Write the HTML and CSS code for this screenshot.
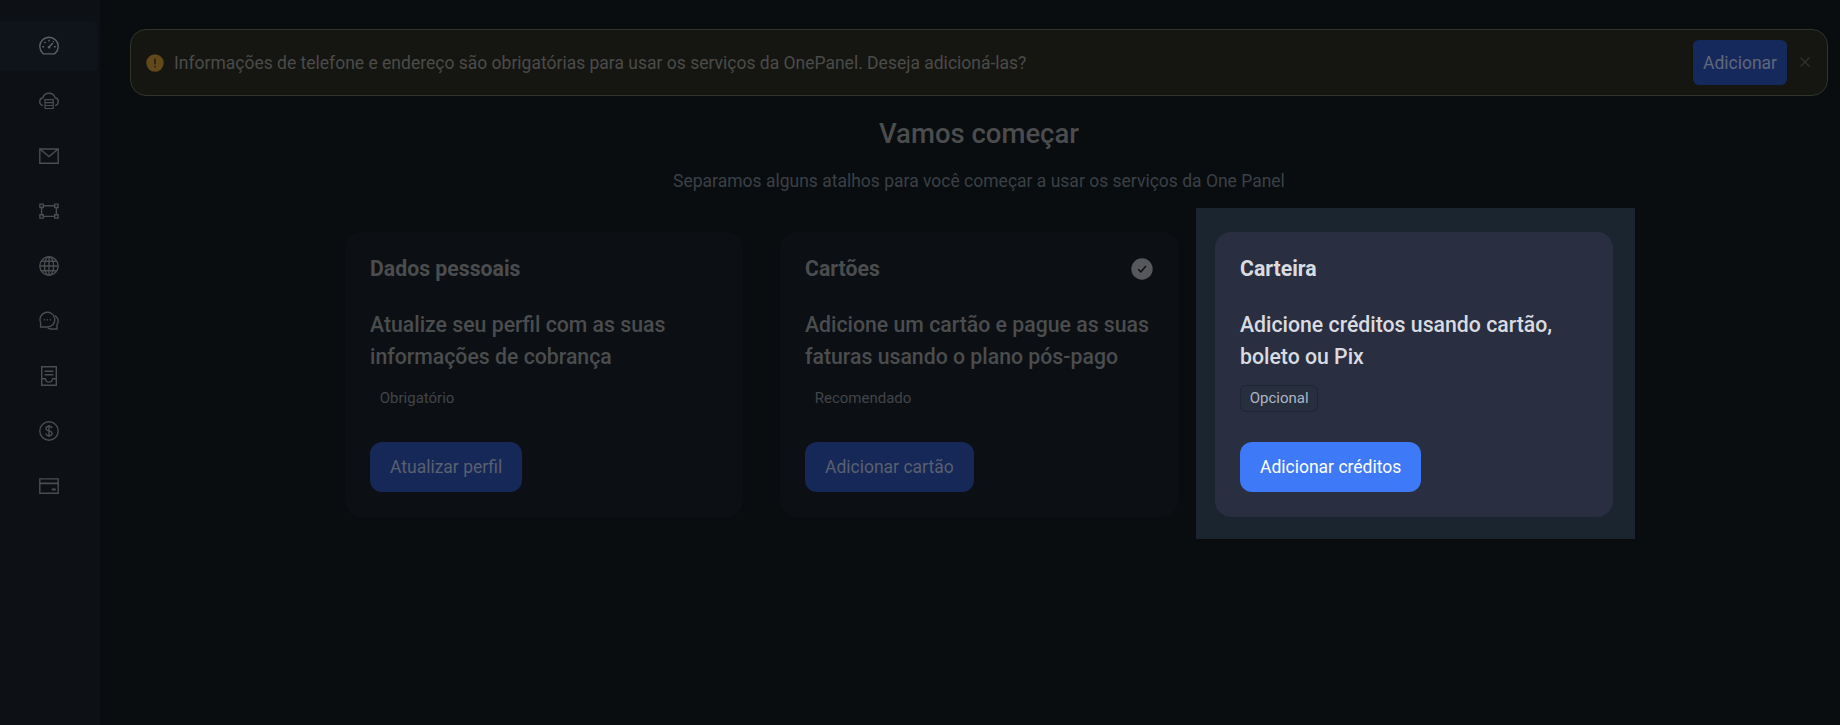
FILE: index.html
```html
<!DOCTYPE html>
<html lang="pt-BR">
<head>
<meta charset="utf-8">
<title>One Panel</title>
<link rel="stylesheet" href="styles.css">
</head>
<body>
<div class="app">
  <nav class="sidebar">
    <a class="nav-item active"><svg viewBox="0 0 20 20"><path d="M3.800 17.200A9.200 9.200 0 1 1 16.200 17.200Q15.600 17.900 14.800 17.900H5.200Q4.400 17.900 3.800 17.200Z"/><path d="M10 11.300 13.800 7" stroke-width="1.500"/><path d="M10 3.800v1.600M5.400 5.900l1.100 1.100M3.300 10.800h1.700M15 10.800h1.700M14 5.900l.6-.6"/><circle cx="10" cy="11.200" r=".6"/></svg></a>
    <a class="nav-item"><svg viewBox="0 0 20 20"><path d="M3.800 14.600C1.700 13.800.7 12.400.7 10.700c0-2 1.300-3.500 3.200-3.900C4.700 4 7.100 2.300 10 2.300s5.300 1.700 6.100 4.500c1.900.4 3.200 1.900 3.200 3.900 0 1.700-1 3.100-3.100 3.900"/><path d="M6 8.600h8.200v8.900H6zM6 11.600h8.200M6 14.500h8.200" stroke-width="1.200"/></svg></a>
    <a class="nav-item"><svg viewBox="0 0 20 20"><path d="M.8 3h18.400v14.300H.8zM1.500 3.500 10 10.500l8.500-7"/></svg></a>
    <a class="nav-item"><svg viewBox="0 0 20 20"><path d="M.9 3.100h3.400v3.400H.9zM15.700 3.100h3.400v3.400h-3.400zM.9 13.700h3.400v3.400H.9zM15.700 13.700h3.400v3.400h-3.400zM4.300 4.800h11.400M4.300 15.400h11.400M2.600 6.500v7.200M17.400 6.500v7.200"/></svg></a>
    <a class="nav-item"><svg viewBox="0 0 20 20"><circle cx="10" cy="10" r="9.200"/><ellipse cx="10" cy="10" rx="4.600" ry="9.200"/><path d="M10 .8v18.400M.8 10h18.400M2.300 5.300h15.400M2.300 14.700h15.400"/></svg></a>
    <a class="nav-item"><svg viewBox="0 0 20 20"><path d="M1.600 16V11.500A7.400 7.400 0 1 1 8.300 16Z"/><path d="M15.600 4.700c2.200 1 3.500 3 3.500 5.400 0 1.400-.4 2.600-1.100 3.600V18h-6c-1.400 0-2.500-.5-3.500-1.500M4.700 8.700h1.200M7.700 8.700h1.200M10.700 8.700h1.200"/></svg></a>
    <a class="nav-item"><svg viewBox="0 0 20 20"><path d="M2.700.8h14.600v18.400H2.700zM5.600 5.200h8.800M5.600 8.700h8.800M2.700 12.800h3.700c.2 2 1.600 3.300 3.600 3.300s3.400-1.300 3.600-3.300h3.700"/></svg></a>
    <a class="nav-item"><svg viewBox="0 0 20 20"><circle cx="10" cy="10" r="9.200"/><path d="M13 7.200C12.700 5.900 11.600 5.300 10 5.300c-1.800 0-3 .9-3 2.200 0 1.500 1.400 2 3 2.400 1.700.4 3.100.9 3.100 2.500 0 1.400-1.300 2.300-3.100 2.300S7 13.900 6.800 12.500M10 3.900v12.200"/></svg></a>
    <a class="nav-item"><svg viewBox="0 0 20 20"><path d="M.8 2.900h18.400v14.300H.8z"/><path d="M.8 7.400h18.400M12.800 13.500h4" stroke-width="1.900"/></svg></a>
  </nav>
  <main class="content">
    <div class="alert">
      <svg class="alert-icon" viewBox="0 0 18 18"><circle cx="9" cy="9" r="8.700" fill="#62481a"/><path d="M9 4.500v6M9 12v1.400" stroke="#16160f" stroke-width="1.300"/></svg>
      <span class="alert-text">Informações de telefone e endereço são obrigatórias para usar os serviços da OnePanel. Deseja adicioná-las?</span>
      <button class="alert-btn">Adicionar</button>
      <svg class="alert-close" viewBox="0 0 10 10"><path d="M.5.500l9 9M9.500.500l-9 9"/></svg>
    </div>
    <h1 class="title">Vamos começar</h1>
    <p class="subtitle">Separamos alguns atalhos para você começar a usar os serviços da One Panel</p>
    <div class="cards">
      <section class="card">
        <div class="card-head"><h2>Dados pessoais</h2></div>
        <p class="card-text">Atualize seu perfil com as suas<br>informações de cobrança</p>
        <span class="tag">Obrigatório</span>
        <button class="btn">Atualizar perfil</button>
      </section>
      <section class="card">
        <div class="card-head"><h2>Cartões</h2><svg class="check" viewBox="0 0 22 22"><circle cx="11" cy="11" r="10.700" fill="#56585b"/><path d="M7.200 11.200l2.700 2.700 5-6" fill="none" stroke="#0d1015" stroke-width="1.500"/></svg></div>
        <p class="card-text">Adicione um cartão e pague as suas<br>faturas usando o plano pós-pago</p>
        <span class="tag">Recomendado</span>
        <button class="btn">Adicionar cartão</button>
      </section>
      <section class="card spotlight">
        <div class="card-head"><h2>Carteira</h2></div>
        <p class="card-text">Adicione créditos usando cartão,<br>boleto ou Pix</p>
        <span class="tag">Opcional</span>
        <button class="btn">Adicionar créditos</button>
      </section>
    </div>
  </main>
</div>
</body>
</html>
```
FILE: styles.css
```css
* { box-sizing: border-box; }
body {
  margin: 0;
  background: #090d0f;
  color: #4b4c4e;
  font-family: Roboto, sans-serif;
  font-size: 17.5px;
}
h1, h2, p { margin: 0; }
button { border: 0; font: inherit; white-space: nowrap; }
.app { display: flex; height: 725px; overflow: hidden; }
.sidebar {
  flex: none;
  width: 100px;
  padding-top: 22px;
  background: #0d1116;
  display: flex;
  flex-direction: column;
  gap: 6px;
}
.nav-item {
  width: 98px;
  height: 49px;
  display: flex;
  align-items: center;
  justify-content: center;
  padding-bottom: 1px;
  border-radius: 0 6px 6px 0;
}
.nav-item.active { background: #0f141b; color: #5d6064; }
.nav-item svg {
  width: 20px;
  height: 20px;
  fill: none;
  stroke: currentColor;
  stroke-width: 1.4;
}
.content {
  flex: 1;
  padding: 29px 12px 0 30px;
  display: flex;
  flex-direction: column;
}
.alert {
  height: 67px;
  display: flex;
  align-items: center;
  padding: 0 17px 0 15px;
  background: #151611;
  border: 1px solid #30342b;
  border-radius: 16px;
}
.alert-icon { width: 18px; height: 18px; flex: none; }
.alert-text { flex: 1; margin-left: 10px; color: #4b4b4a; }
.alert-btn {
  width: 94px;
  height: 45px;
  padding: 0;
  border-radius: 6px;
  background: #16295d;
  color: #606778;
}
.alert-close { width: 10px; height: 10px; margin: 0 0 2px 13px; stroke: #30322d; stroke-width: 1.2; }
.title {
  margin-top: 18px;
  text-align: center;
  font-size: 27.5px;
  line-height: 40px;
  font-weight: 500;
}
.subtitle {
  margin-top: 14px;
  text-align: center;
  line-height: 26px;
  color: #3b4047;
}
.cards { display: flex; gap: 37px; margin: 38px 0 0 215px; }
.card {
  position: relative;
  width: 398px;
  height: 285px;
  padding: 25px;
  border-radius: 16px;
  background: #0c1014;
  display: flex;
  flex-direction: column;
  align-items: flex-start;
}
.card-head {
  width: 100%;
  height: 24px;
  display: flex;
  align-items: center;
  justify-content: space-between;
}
.card-head h2 { font-size: 21.25px; line-height: 24px; font-weight: 700; }
.check { width: 22px; height: 22px; }
.card-text {
  margin-top: 28px;
  font-size: 21.25px;
  line-height: 32px;
  font-weight: 500;
  white-space: nowrap;
}
.tag {
  margin-top: 12px;
  height: 27px;
  padding: 0 8.75px;
  border: 1px solid transparent;
  border-radius: 6px;
  font-size: 15px;
  line-height: 24px;
  color: #424449;
}
.btn {
  margin-top: 30px;
  height: 50px;
  padding: 0 20px;
  border-radius: 12px;
  background: #162857;
  color: #596070;
}
.spotlight { background: #292f40; color: #d9dbe0; }
/* undimmed area around the highlighted card */
.spotlight::before {
  content: "";
  position: absolute;
  z-index: -1;
  top: -24px;
  right: -22px;
  bottom: -22px;
  left: -19px;
  background: #1b2530;
}
.spotlight .tag { color: #adb5c5; background: #272f3f; border-color: #1e2734; }
.spotlight .btn { background: #3e79f7; color: #fff; }
```
